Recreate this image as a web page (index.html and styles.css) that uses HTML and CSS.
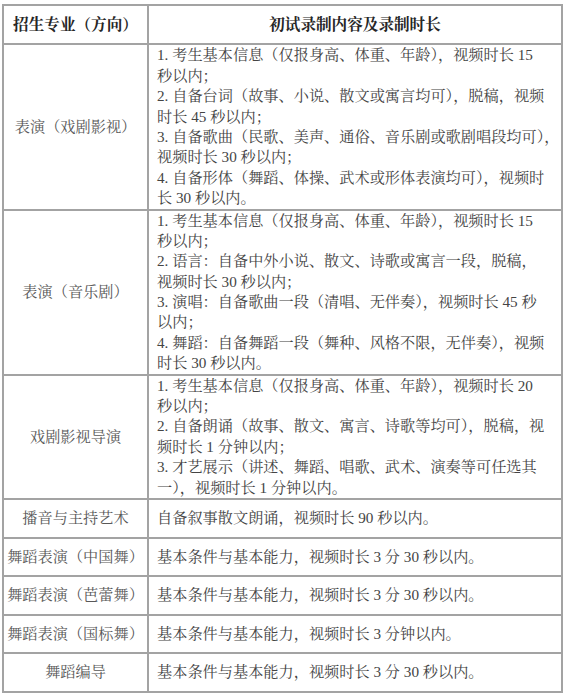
FILE: index.html
```html
<!DOCTYPE html>
<html lang="zh-CN">
<head>
<meta charset="utf-8">
<title>初试录制内容及录制时长</title>
<link rel="stylesheet" href="styles.css">
</head>
<body>
<table class="plan">
  <colgroup>
    <col class="c-major">
    <col class="c-content">
  </colgroup>
  <thead>
    <tr class="head">
      <th>招生专业（方向）</th>
      <th>初试录制内容及录制时长</th>
    </tr>
  </thead>
  <tbody>
    <tr class="multi">
      <td class="major">表演（戏剧影视）</td>
      <td class="content">
        <p class="item"><span class="ln">1. 考生基本信息（仅报身高、体重、年龄），视频时长 15</span><span class="ln">秒以内；</span></p>
        <p class="item"><span class="ln">2. 自备台词（故事、小说、散文或寓言均可），脱稿，视频</span><span class="ln">时长 45 秒以内；</span></p>
        <p class="item"><span class="ln">3. 自备歌曲（民歌、美声、通俗、音乐剧或歌剧唱段均可），</span><span class="ln">视频时长 30 秒以内；</span></p>
        <p class="item"><span class="ln">4. 自备形体（舞蹈、体操、武术或形体表演均可），视频时</span><span class="ln">长 30 秒以内。</span></p>
      </td>
    </tr>
    <tr class="multi">
      <td class="major">表演（音乐剧）</td>
      <td class="content">
        <p class="item"><span class="ln">1. 考生基本信息（仅报身高、体重、年龄），视频时长 15</span><span class="ln">秒以内；</span></p>
        <p class="item"><span class="ln">2. 语言：自备中外小说、散文、诗歌或寓言一段，脱稿，</span><span class="ln">视频时长 30 秒以内；</span></p>
        <p class="item"><span class="ln">3. 演唱：自备歌曲一段（清唱、无伴奏），视频时长 45 秒</span><span class="ln">以内；</span></p>
        <p class="item"><span class="ln">4. 舞蹈：自备舞蹈一段（舞种、风格不限，无伴奏），视频</span><span class="ln">时长 30 秒以内。</span></p>
      </td>
    </tr>
    <tr class="multi">
      <td class="major">戏剧影视导演</td>
      <td class="content">
        <p class="item"><span class="ln">1. 考生基本信息（仅报身高、体重、年龄），视频时长 20</span><span class="ln">秒以内；</span></p>
        <p class="item"><span class="ln">2. 自备朗诵（故事、散文、寓言、诗歌等均可），脱稿，视</span><span class="ln">频时长 1 分钟以内；</span></p>
        <p class="item"><span class="ln">3. 才艺展示（讲述、舞蹈、唱歌、武术、演奏等可任选其</span><span class="ln">一），视频时长 1 分钟以内。</span></p>
      </td>
    </tr>
    <tr class="single">
      <td class="major">播音与主持艺术</td>
      <td class="content"><span class="ln">自备叙事散文朗诵，视频时长 90 秒以内。</span></td>
    </tr>
    <tr class="single">
      <td class="major">舞蹈表演（中国舞）</td>
      <td class="content"><span class="ln">基本条件与基本能力，视频时长 3 分 30 秒以内。</span></td>
    </tr>
    <tr class="single">
      <td class="major">舞蹈表演（芭蕾舞）</td>
      <td class="content"><span class="ln">基本条件与基本能力，视频时长 3 分 30 秒以内。</span></td>
    </tr>
    <tr class="single">
      <td class="major">舞蹈表演（国标舞）</td>
      <td class="content"><span class="ln">基本条件与基本能力，视频时长 3 分钟以内。</span></td>
    </tr>
    <tr class="single">
      <td class="major">舞蹈编导</td>
      <td class="content"><span class="ln">基本条件与基本能力，视频时长 3 分 30 秒以内。</span></td>
    </tr>
  </tbody>
</table>
</body>
</html>
```
FILE: styles.css
```css
html, body {
  margin: 0;
  padding: 0;
  background: #ffffff;
}

body {
  padding: 4px 0 0 2px;
  font-family: "Liberation Serif", "Noto Serif CJK SC", "Noto Sans CJK SC", serif;
  font-size: 15.2px;
  line-height: 20.4px;
  color: #444444;
}

.plan {
  width: 561px;
  border-collapse: collapse;
  table-layout: fixed;
}

.c-major {
  width: 145px;
}

.plan th,
.plan td {
  border: 2px solid #a3a3a3;
  white-space: nowrap;
}

.head th {
  padding: 8.5px 2px;
  height: 20.4px;
  font-weight: bold;
  color: #262626;
  text-align: center;
  font-size: 15.6px;
}

.major {
  text-align: center;
  vertical-align: middle;
  padding: 0 2px;
  color: #585858;
}

.content {
  text-align: left;
  vertical-align: middle;
  padding: 0 3px 0 8px;
}

.multi .content {
  padding-top: 0;
  padding-bottom: 0;
}

.single td {
  padding-top: 8.1px;
  padding-bottom: 8.1px;
}

.item {
  margin: 0;
}

.ln {
  display: block;
  height: 20.4px;
  overflow: visible;
}
```
